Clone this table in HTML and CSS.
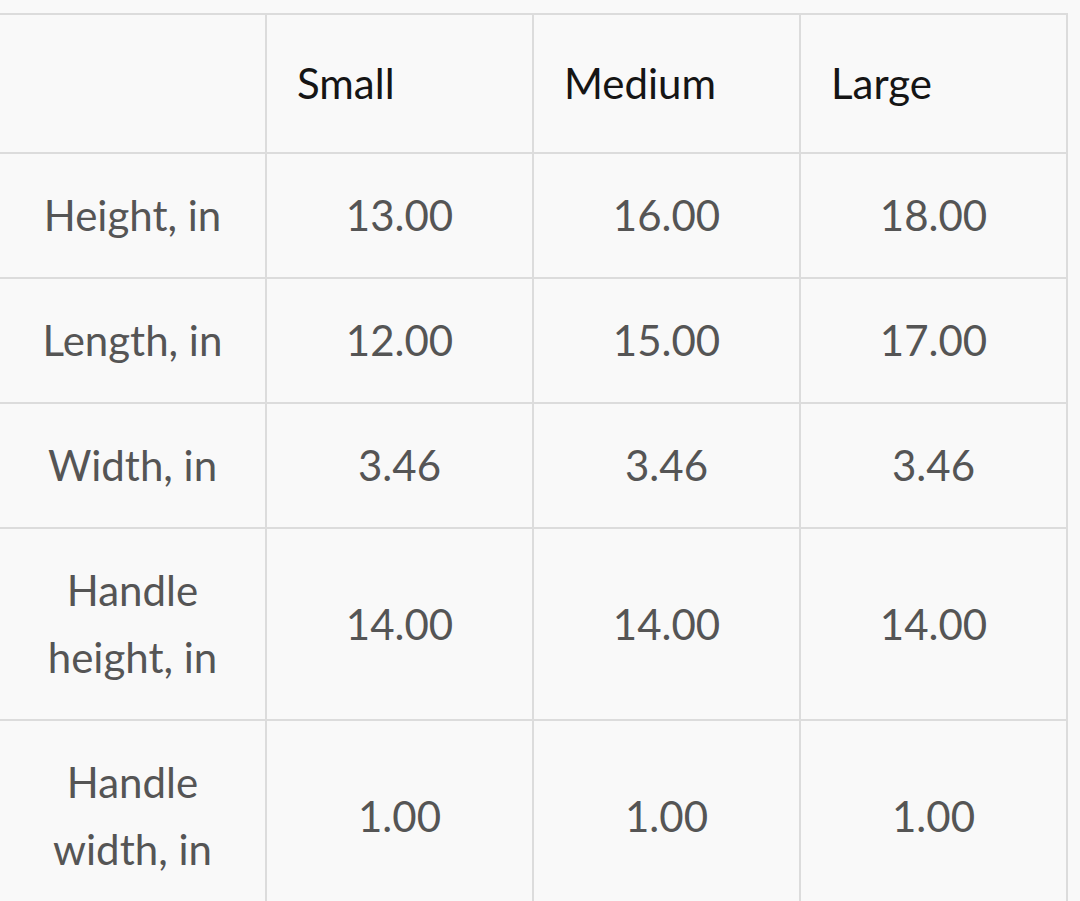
FILE: index.html
```html
<!DOCTYPE html>
<html>
<head>
<meta charset="utf-8">
<link rel="stylesheet" href="styles.css">
</head>
<body>
<div class="wrap">
<table class="sizes">
  <colgroup><col class="c"><col class="c"><col class="c"><col class="c"></colgroup>
  <thead>
    <tr><th></th><th>Small</th><th>Medium</th><th>Large</th></tr>
  </thead>
  <tbody>
    <tr><td>Height, in</td><td>13.00</td><td>16.00</td><td>18.00</td></tr>
    <tr><td>Length, in</td><td>12.00</td><td>15.00</td><td>17.00</td></tr>
    <tr><td>Width, in</td><td>3.46</td><td>3.46</td><td>3.46</td></tr>
    <tr><td>Handle<br>height, in</td><td>14.00</td><td>14.00</td><td>14.00</td></tr>
    <tr><td>Handle<br>width, in</td><td>1.00</td><td>1.00</td><td>1.00</td></tr>
  </tbody>
</table>
</div>
</body>
</html>
```
FILE: styles.css
```css
html, body {
  margin: 0;
  padding: 0;
  background: #f9f9f9;
}
.wrap {
  padding-top: 13px;
  margin-left: -2px;
}
.sizes {
  border-collapse: collapse;
  table-layout: fixed;
  width: 1070px;
  font-family: "Lato", "Open Sans", sans-serif;
  font-size: 42px;
  line-height: 67px;
}
.sizes .c {
  width: 267px;
}
.sizes th, .sizes td {
  border: 2px solid #dcdcdc;
}
.sizes th {
  text-align: left;
  font-weight: normal;
  color: #151515;
  padding: 35px 30px;
}
.sizes td {
  text-align: center;
  color: #555555;
  padding: 28px 10px;
}
```
